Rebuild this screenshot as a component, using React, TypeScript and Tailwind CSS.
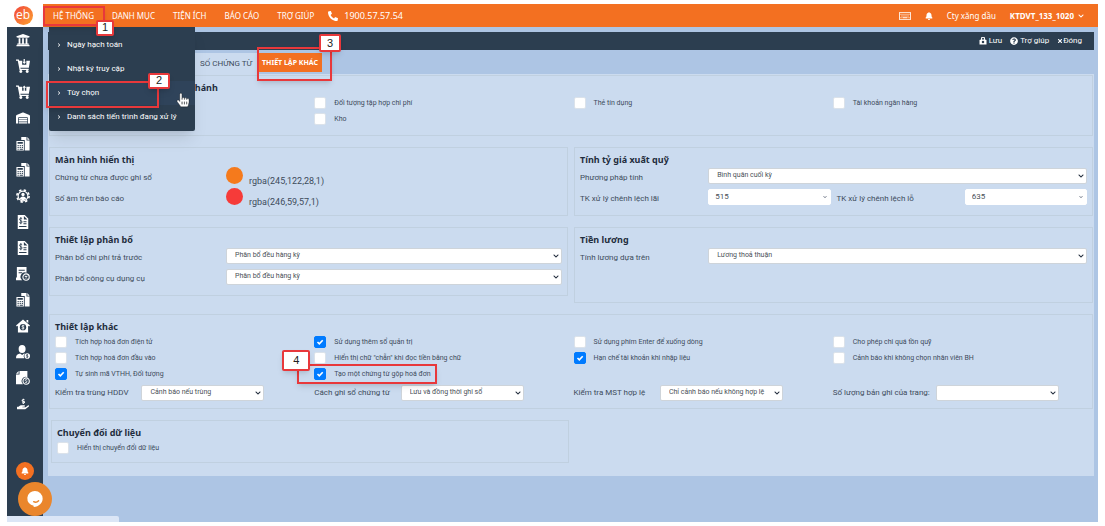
import type { ReactNode } from 'react';
import {
  FaBell,
  FaChevronDown,
  FaHandHoldingUsd,
  FaHandPointer,
  FaPhoneAlt,
  FaQuestionCircle,
  FaRegKeyboard,
  FaTimes,
  FaUniversity,
  FaWarehouse,
} from 'react-icons/fa';

const MENU_ITEMS = ['Ngày hạch toán', 'Nhật ký truy cập', 'Tùy chọn', 'Danh sách tiến trình đang xử lý'];

function Glyph({ children }: { children: ReactNode }) {
  return (
    <svg viewBox="0 0 16 16" className="h-3.5 w-3.5" fill="currentColor" aria-hidden="true">
      {children}
    </svg>
  );
}

function CartIcon({ up }: { up?: boolean }) {
  return (
    <Glyph>
      <path
        fillRule="evenodd"
        d="M0 .500h3.200l.5 1.500H16l-1.300 8.100H5l.3 1h9.200v1.400H4.100L2 2H0zM7 2v4.500h4.800V2z"
      />
      <circle cx="5.500" cy="14.200" r="1.700" />
      <circle cx="12.800" cy="14.200" r="1.700" />
      {up ? <path d="M8.700 7V3.200H7.200L9.400 .500l2.200 2.700h-1.500V7z" /> : <path d="M8.700 0h1.400v3h1.500L9.400 5.700 7.200 3h1.500z" />}
    </Glyph>
  );
}

function CalcDocIcon() {
  return (
    <Glyph>
      <path d="M6 0h6v4h3.500v11.500H10V3.500H6zM13 0l2.500 3H13z" />
      <path
        fillRule="evenodd"
        d="M.500 4.500H9v11H.500zM1.800 5.700v2H7.800v-2zM1.800 9v1.300h1.300V9zM4.200 9v1.300h1.300V9zM6.600 9v1.300h1.300V9zM1.800 11.200v1.300h1.300v-1.300zM4.200 11.200v1.300h1.300v-1.300zM6.600 11.200v1.300h1.300v-1.300zM1.800 13.400v1.200h1.300v-1.200zM4.200 13.400v1.200h3.700v-1.200z"
      />
    </Glyph>
  );
}

function GearUserIcon() {
  return (
    <Glyph>
      <circle cx="8" cy="8" r="5.600" fill="none" stroke="currentColor" strokeWidth="1.300" />
      <circle cx="8" cy="8" r="7" fill="none" stroke="currentColor" strokeWidth="1.800" strokeDasharray="2.750 2.750" />
      <circle cx="8" cy="6.300" r="1.900" />
      <path d="M4.500 11.500c0-2 1.500-3 3.500-3s3.500 1 3.500 3L8 13z" />
    </Glyph>
  );
}

function DollarDocIcon() {
  return (
    <Glyph>
      <path
        fillRule="evenodd"
        d="M2 0h8l4 4v12H2zM9 1v4h4zM8.500 7v1.200H12V7zM8.500 9.500v1.200H12V9.500zM3.500 12.500v1.300H12v-1.300z"
      />
      <path
        d="M7 4.200C5.800 3.200 4 3.700 4 5c0 1.700 3 1.200 3 3 0 1.300-2 1.700-3.200.6M5.500 2.500v8"
        fill="none"
        stroke="#2c3e50"
      />
    </Glyph>
  );
}

function CancelDocIcon() {
  return (
    <Glyph>
      <path fillRule="evenodd" d="M1 0h11v6.500a5 5 0 0 0-5 8.500H0v-3h1zM3 3v1.200h7V3zM3 6v1.200h4V6z" />
      <circle cx="11.500" cy="11.500" r="3.600" fill="none" stroke="currentColor" strokeWidth="1.300" />
      <path d="M10 10l3 3m0-3l-3 3" stroke="currentColor" strokeWidth="1.200" />
    </Glyph>
  );
}

function HomeDollarIcon() {
  return (
    <Glyph>
      <path d="M8 .500L16 7.500l-1 1.200-1.200-1V15.500H2.200V7.700L1 8.700 0 7.500zM12 1.200h2v3.500l-2-1.700z" />
      <circle cx="8" cy="9.300" r="3.600" fill="#2c3e50" />
      <path d="M9.500 7.800C8.500 7 6.700 7.400 6.900 8.500s2.500.6 2.400 1.800-2 1.200-2.900.4M8 6.500v5.600" fill="none" stroke="currentColor" strokeWidth=".900" />
    </Glyph>
  );
}

function UserDollarIcon() {
  return (
    <Glyph>
      <path d="M3 4.500C3 1.500 4.500 0 7 0s4 1.500 4 4.500S9.500 9 7 9 3 7.500 3 4.500zM0 15c0-3.500 2-4.800 4.800-5.200L7 11.500l2.200-1.700.8.200a4 4 0 0 0-.5 5z" />
      <circle cx="12.800" cy="12.600" r="3.200" />
      <path d="M13.800 11.400c-1-.7-2-.3-1.900.4s1.900.5 1.800 1.500-1.500.9-2 .3M12.800 10.400v4.500" fill="none" stroke="#2c3e50" strokeWidth=".800" />
    </Glyph>
  );
}

function CoinDocIcon() {
  return (
    <Glyph>
      <path d="M4 0h9v7a4.800 4.800 0 0 0-5 8H0V4h4zM3 0v3H0z" />
      <circle cx="11.600" cy="11.500" r="3.600" fill="none" stroke="currentColor" strokeWidth="1.300" />
      <path d="M13 10.200c-1-.8-2.600-.4-2.500.5s2.200.6 2.100 1.700-1.800 1-2.500.3" fill="none" stroke="currentColor" />
    </Glyph>
  );
}

const SIDEBAR = [
  { label: 'Ngân hàng', icon: <FaUniversity className="h-3.5 w-3.5" /> },
  { label: 'Mua hàng', icon: <CartIcon /> },
  { label: 'Bán hàng', icon: <CartIcon up /> },
  { label: 'Kho', icon: <FaWarehouse className="h-3.5 w-3.5" /> },
  { label: 'Công cụ', icon: <CalcDocIcon /> },
  { label: 'Tài sản', icon: <CalcDocIcon /> },
  { label: 'Nhân sự', icon: <GearUserIcon /> },
  { label: 'Hóa đơn', icon: <DollarDocIcon /> },
  { label: 'Chứng từ', icon: <DollarDocIcon /> },
  { label: 'Hủy hóa đơn', icon: <CancelDocIcon /> },
  { label: 'Thuế', icon: <CalcDocIcon /> },
  { label: 'Giá thành', icon: <HomeDollarIcon /> },
  { label: 'Tiền lương', icon: <UserDollarIcon /> },
  { label: 'Hợp đồng', icon: <CoinDocIcon /> },
  { label: 'Ngân sách', icon: <FaHandHoldingUsd className="h-3 w-3" /> },
];

// Red frame with a numbered tag, drawn over the step it points at
function Step({ n, frame, tag }: { n: number; frame: string; tag: string }) {
  return (
    <span className={`pointer-events-none absolute z-20 border-2 border-[#e8383b] shadow-md ${frame}`}>
      <span
        className={`absolute flex items-center justify-center rounded-xs border-2 border-[#e8383b] bg-white font-['Liberation_Sans'] text-[11px] font-normal text-[#222] shadow-md ${tag}`}
      >
        {n}
      </span>
    </span>
  );
}

function Section({ title, className = '', children }: { title: string; className?: string; children: ReactNode }) {
  return (
    <section className={`border border-[#c0d0e0] px-[5px] pt-1.5 ${className}`}>
      <h2 className="font-['Noto_Sans',sans-serif] text-[9px] leading-[11px] font-bold text-[#1f2d3d]">{title}</h2>
      {children}
    </section>
  );
}

function Select({ id, value, caret }: { id: string; value: string; caret?: boolean }) {
  return (
    <span className="relative block">
      <select
        id={id}
        defaultValue={value}
        className={`block h-4 w-full appearance-none rounded-xs border pr-3 text-[#495057] outline-none ${
          caret ? 'border-white bg-white pl-1.5 text-[8px]' : 'border-[#ced4da] bg-white pl-2 text-[7px]'
        }`}
      >
        <option>{value}</option>
      </select>
      <FaChevronDown
        className={`pointer-events-none absolute top-1/2 -translate-y-1/2 ${
          caret ? 'right-1 h-1 w-1 text-gray-500' : 'right-[3px] h-1.5 w-1.5 text-gray-800'
        }`}
      />
    </span>
  );
}

function Label({ htmlFor, children }: { htmlFor?: string; children: ReactNode }) {
  return (
    <label htmlFor={htmlFor} className="pt-1 text-[8px] leading-[11px] whitespace-nowrap">
      {children}
    </label>
  );
}

function Check({ label, checked, step }: { label: string; checked?: boolean; step?: ReactNode }) {
  return (
    <div className="relative flex h-4 items-center">
      <label className="flex items-center gap-2 text-[7px] leading-[10px] whitespace-nowrap">
        <span className="relative block h-3 w-3">
          <input
            type="checkbox"
            defaultChecked={checked}
            className="peer block h-3 w-3 appearance-none rounded-xs border border-[#dbe2ea] bg-white checked:border-[#007bff] checked:bg-[#007bff]"
          />
          <svg
            viewBox="0 0 12 12"
            className="pointer-events-none absolute inset-0 hidden h-3 w-3 text-white peer-checked:block"
            fill="none"
            stroke="currentColor"
            strokeWidth="1.600"
            aria-hidden="true"
          >
            <path d="M3.500 6l1.800 1.800L8.700 4.200" />
          </svg>
        </span>
        {label}
      </label>
      {step}
    </div>
  );
}

function Header() {
  const item = 'cursor-pointer text-[8px] leading-3 whitespace-nowrap';
  return (
    <header className="flex h-[23px] shrink-0 font-['Noto_Sans',sans-serif]">
      <a href="#" aria-label="eb" className="flex w-9 items-center justify-center bg-white pr-1">
        <span className="flex h-[19px] w-[19px] items-center justify-center rounded-full bg-linear-to-br from-[#f0403a] to-[#fba02c] pb-0.5 font-['Open_Sans'] text-[12px] leading-none font-medium text-white">
          eb
        </span>
      </a>
      <div className="flex flex-1 items-center bg-[#f37021] pr-3.5 pl-2.5 text-white">
        <nav className="flex items-center gap-[18px]">
          <div className="relative flex">
            <button className={item}>HỆ THỐNG</button>
            <Step n={1} frame="-top-1 -left-2.5 h-5 w-[62px]" tag="top-3 left-[51px] h-4 w-[18px]" />
            <ul className="absolute top-[17px] -left-1 z-10 w-[146px] rounded-b-xs bg-[#2c3e50] pt-1.5 pb-0.5 font-['Roboto','Noto_Sans',sans-serif] shadow-lg">
              {MENU_ITEMS.map((name) => (
                <li key={name} className="relative">
                  <a
                    href="#"
                    className={`flex h-6 items-center gap-1.5 pl-2 text-[8px] whitespace-nowrap ${
                      name === 'Tùy chọn' ? 'bg-[#2f435a]' : ''
                    }`}
                  >
                    <FaChevronDown className="h-1 w-1 -rotate-90" />
                    {name}
                  </a>
                  {name === 'Tùy chọn' && (
                    <>
                      <Step n={2} frame="top-0 -left-[3px] h-[27px] w-[113px]" tag="-top-2.5 right-[-13px] h-4 w-[22px]" />
                      <FaHandPointer className="absolute top-3 right-1.5 h-3.5 w-3 overflow-visible stroke-black stroke-[12px] text-white" />
                    </>
                  )}
                </li>
              ))}
            </ul>
          </div>
          <button className={item}>DANH MỤC</button>
          <button className={item}>TIỆN ÍCH</button>
          <button className={item}>BÁO CÁO</button>
          <button className={item}>TRỢ GIÚP</button>
        </nav>
        <a href="tel:1900575754" className="ml-3.5 flex items-center gap-1.5 text-[9px] leading-3">
          <FaPhoneAlt className="h-2.5 w-2.5" />
          1900.57.57.54
        </a>
        <div className="ml-auto flex items-center gap-3.5">
          <FaRegKeyboard className="h-3 w-3" />
          <FaBell className="h-2 w-2" />
          <span className="text-[8px]">Cty xăng dầu</span>
          <button className="flex cursor-pointer items-center gap-1 text-[8px] font-bold">
            KTDVT_133_1020
            <FaChevronDown className="h-1.5 w-1.5" />
          </button>
        </div>
      </div>
    </header>
  );
}

function Sidebar() {
  return (
    <aside className="flex w-9 shrink-0 flex-col items-center bg-[#2c3e50] pb-[42px] text-white">
      {SIDEBAR.map((entry) => (
        <button key={entry.label} aria-label={entry.label} className="flex h-[26px] w-full items-center justify-center pr-1">
          {entry.icon}
        </button>
      ))}
      <button
        aria-label="Thông báo"
        className="mt-auto flex h-[18px] w-[18px] items-center justify-center rounded-full bg-[#f37021]"
      >
        <FaBell className="h-2 w-2" />
      </button>
    </aside>
  );
}

export default function App() {
  return (
    <div className="min-h-screen bg-white px-[7px] py-1 font-['Roboto','Noto_Sans',sans-serif] text-[#3d4b5c]">
      <div className="relative flex min-h-[calc(100vh-8px)] flex-col bg-[#adc5e4]">
        <Header />

        <div className="flex flex-1">
          <Sidebar />

          <main className="min-w-0 flex-1 pt-[5px] pr-1 pl-[5px]">
            <div className="flex h-[18px] items-center justify-end gap-2 bg-[#2c3e50] pr-3 text-[8px] text-white">
              <button className="flex items-center gap-0.5">
                <svg viewBox="0 0 16 16" className="h-2 w-2" fill="currentColor" aria-hidden="true">
                  <path fillRule="evenodd" d="M4 5V3a4 4 0 0 1 8 0v2l3 1v9H1V6zM6 5h4V3.500a2 2 0 0 0-4 0zM8 7.500a2.500 2.500 0 1 0 0 5 2.500 2.500 0 0 0 0-5z" />
                </svg>
                Lưu
              </button>
              <button className="flex items-center gap-0.5">
                <FaQuestionCircle className="h-2 w-2" />
                Trợ giúp
              </button>
              <button className="flex items-center">
                <FaTimes className="h-1.5 w-1.5" />
                Đóng
              </button>
            </div>

            <div className="flex items-start pt-[3px] pl-[146px]">
              <button className="h-[21px] bg-[#cbdbef] px-1.5 text-[8px] leading-3 whitespace-nowrap">SỐ CHỨNG TỪ</button>
              <div className="relative flex">
                <button className="h-[19px] bg-[#f37021] px-1 font-['Noto_Sans',sans-serif] text-[7px] leading-3 font-bold whitespace-nowrap text-white">
                  THIẾT LẬP KHÁC
                </button>
                <Step n={3} frame="-top-1.5 -left-px h-[34px] w-[75px]" tag="-top-[15px] right-[-11px] h-[18px] w-[22px]" />
              </div>
            </div>

            <div className="flex flex-col gap-[11px] bg-[#cbdbef] px-px pt-px pb-[13px]">
              <section className="border border-[#c0d0e0] pt-1.5 pb-2 pl-[5px]">
                <h2 className="mb-0.5 pl-[134px] font-['Noto_Sans',sans-serif] text-[9px] leading-[11px] font-bold text-[#1f2d3d]">
                  nhánh
                </h2>
                <div className="grid grid-cols-4">
                  <div className="col-start-2">
                    <Check label="Đối tượng tập hợp chi phí" />
                    <Check label="Kho" />
                  </div>
                  <Check label="Thẻ tín dụng" />
                  <Check label="Tài khoản ngân hàng" />
                </div>
              </section>

              <div className="grid grid-cols-2 gap-x-1.5 gap-y-[11px]">
                <Section title="Màn hình hiển thị" className="pb-2">
                  <div className="grid auto-rows-[21px] grid-cols-3 items-center gap-x-1.5">
                    <Label>Chứng từ chưa được ghi sổ</Label>
                    <div className="col-span-2 flex items-center gap-1.5">
                      <span className="h-[17px] w-[17px] rounded-full bg-[#f57a1c]" />
                      <span className="pt-2.5 text-[9px] leading-3">rgba(245,122,28,1)</span>
                    </div>
                    <Label>Số âm trên báo cáo</Label>
                    <div className="col-span-2 flex items-center gap-1.5">
                      <span className="h-[17px] w-[17px] rounded-full bg-[#f63b39]" />
                      <span className="pt-2.5 text-[9px] leading-3">rgba(246,59,57,1)</span>
                    </div>
                  </div>
                </Section>

                <Section title="Tính tỷ giá xuất quỹ" className="pb-2">
                  <div className="grid auto-rows-[21px] grid-cols-4 items-center gap-x-1.5">
                    <Label htmlFor="method">Phương pháp tính</Label>
                    <div className="col-span-3">
                      <Select id="method" value="Bình quân cuối kỳ" />
                    </div>
                    <Label htmlFor="gain">TK xử lý chênh lệch lãi</Label>
                    <Select id="gain" value="515" caret />
                    <Label htmlFor="loss">TK xử lý chênh lệch lỗ</Label>
                    <Select id="loss" value="635" caret />
                  </div>
                </Section>

                <Section title="Thiết lập phân bổ" className="self-start pb-2">
                  <div className="grid auto-rows-[21px] grid-cols-3 items-center gap-x-1.5">
                    <Label htmlFor="prepaid">Phân bổ chi phí trả trước</Label>
                    <div className="col-span-2">
                      <Select id="prepaid" value="Phân bổ đều hàng kỳ" />
                    </div>
                    <Label htmlFor="tools">Phân bổ công cụ dụng cụ</Label>
                    <div className="col-span-2">
                      <Select id="tools" value="Phân bổ đều hàng kỳ" />
                    </div>
                  </div>
                </Section>

                <Section title="Tiền lương" className="pb-9">
                  <div className="grid auto-rows-[21px] grid-cols-4 items-center gap-x-1.5">
                    <Label htmlFor="salary">Tính lương dựa trên</Label>
                    <div className="col-span-3">
                      <Select id="salary" value="Lương thoả thuận" />
                    </div>
                  </div>
                </Section>
              </div>

              <section className="border border-[#c0d0e0] pt-1.5 pb-[5px] pl-[5px]">
                <h2 className="mb-0.5 font-['Noto_Sans',sans-serif] text-[9px] leading-[11px] font-bold text-[#1f2d3d]">
                  Thiết lập khác
                </h2>
                <div className="grid grid-cols-4">
                  <div>
                    <Check label="Tích hợp hoá đơn điện tử" />
                    <Check label="Tích hợp hoá đơn đầu vào" />
                    <Check label="Tự sinh mã VTHH, Đối tượng" checked />
                  </div>
                  <div>
                    <Check label="Sử dụng thêm sổ quản trị" checked />
                    <Check label={'Hiển thị chữ "chẵn" khi đọc tiền bằng chữ'} />
                    <Check
                      label="Tạo một chứng từ gộp hoá đơn"
                      checked
                      step={
                        <Step n={4} frame="-top-0.5 -left-[17px] h-5 w-[140px]" tag="-top-4 -left-[17px] h-[21px] w-7" />
                      }
                    />
                  </div>
                  <div>
                    <Check label="Sử dụng phím Enter để xuống dòng" />
                    <Check label="Hạn chế tài khoản khi nhập liệu" checked />
                  </div>
                  <div>
                    <Check label="Cho phép chi quá tồn quỹ" />
                    <Check label="Cảnh báo khi không chọn nhân viên BH" />
                  </div>
                  {[
                    ['dup', 'Kiểm tra trùng HDDV', 'Cảnh báo nếu trùng'],
                    ['post', 'Cách ghi sổ chứng từ', 'Lưu và đồng thời ghi sổ'],
                    ['tax', 'Kiểm tra MST hợp lệ', 'Chỉ cảnh báo nếu không hợp lệ'],
                    ['rows', 'Số lượng bản ghi của trang:', ''],
                  ].map(([id, label, value]) => (
                    <div key={id} className="flex h-[21px] items-center">
                      <label htmlFor={id} className="min-w-1/3 pr-1.5 text-[8px] leading-[11px] whitespace-nowrap">
                        {label}
                      </label>
                      <div className="w-[123px]">
                        <Select id={id} value={value} />
                      </div>
                    </div>
                  ))}
                </div>
              </section>

              <div className="grid grid-cols-2 gap-x-1.5 pl-0.5">
                <Section title="Chuyển đổi dữ liệu" className="pb-1.5">
                  <div className="pt-0.5">
                    <Check label="Hiển thị chuyển đổi dữ liệu" />
                  </div>
                </Section>
              </div>
            </div>
          </main>
        </div>

        {/* Browser status bubble and the chat launcher float over the page */}
        <div className="absolute bottom-0 left-0 h-1.5 w-28 rounded-tr-xs bg-[#dbe6f6]" />
        <button
          aria-label="Chat"
          className="absolute bottom-[6px] left-[11px] flex h-[34px] w-[34px] items-center justify-center rounded-full bg-[#ea862c] text-white"
        >
          <svg viewBox="0 0 20 20" className="h-[18px] w-[18px]" aria-hidden="true">
            <path d="M10 1a8.500 8.500 0 0 1 8.500 8.500c0 5-4 9-10 9.500v-1.500A8.300 8.300 0 0 1 10 1z" fill="currentColor" />
            <path d="M8.500 13c2 1 4 .6 5.500-1" fill="none" stroke="#ea862c" strokeWidth="1.600" strokeLinecap="round" />
          </svg>
        </button>
      </div>
    </div>
  );
}
